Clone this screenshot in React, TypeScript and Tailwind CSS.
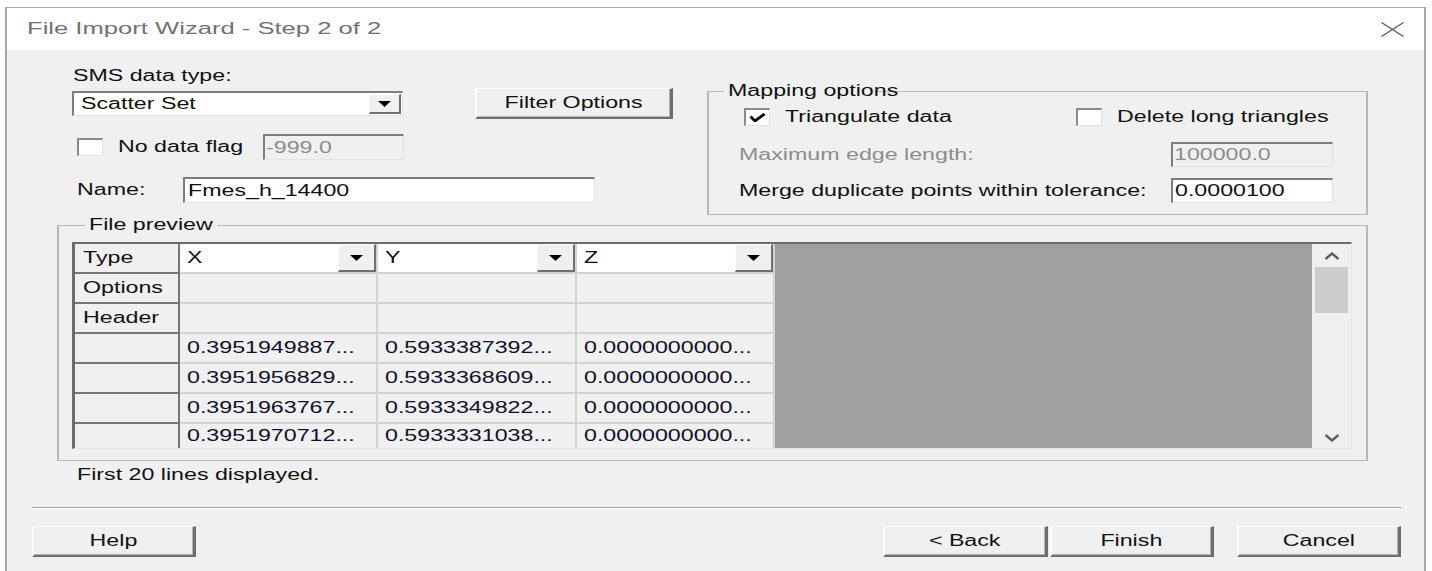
import React from "react";

type WideProps = { children?: React.ReactNode; center?: boolean; className?: string };

// Text drawn with the wide, stretched letterforms of the dialog
function Wide({ children, center = false, className = "" }: WideProps) {
  return (
    <span
      className={`inline-block whitespace-nowrap ${center ? "origin-center" : "origin-left"} ${className || "scale-x-[1.45]"}`}
    >
      {children}
    </span>
  );
}

function DropArrow() {
  return (
    <svg width="13" height="6" viewBox="0 0 13 6">
      <path d="M0 0h13L6.5 6z" fill="#000" />
    </svg>
  );
}

function Chevron({ up = false }: { up?: boolean }) {
  return (
    <svg width="16" height="8" viewBox="0 0 16 8">
      <path
        d={up ? "M1.5 7 L8 1.5 L14.5 7" : "M1.5 1 L8 6.5 L14.5 1"}
        fill="none"
        stroke="#5f5f5f"
        strokeWidth="2.4"
      />
    </svg>
  );
}

function CloseIcon() {
  return (
    <svg width="23" height="15" viewBox="0 0 23 15">
      <path d="M0.5 0.5 L22.5 14.5 M22.5 0.5 L0.5 14.5" stroke="#5c5c5c" strokeWidth="1.3" fill="none" />
    </svg>
  );
}

function Checkbox({ checked = false }: { checked?: boolean }) {
  return (
    <span className="flex h-[18px] w-[26px] shrink-0 items-center justify-center border-t-2 border-l-2 border-b border-r border-t-[#8a8a8a] border-l-[#8a8a8a] border-b-[#e2e2e2] border-r-[#e2e2e2] bg-white">
      {checked && (
        <svg width="17" height="9" viewBox="0 0 17 9">
          <path d="M1.5 3.5 L6 8 L15.5 1" fill="none" stroke="#000" strokeWidth="2.8" />
        </svg>
      )}
    </span>
  );
}

const sunken =
  "border-t-2 border-l-2 border-b border-r border-t-[#7d7d7d] border-l-[#7d7d7d] border-b-[#e3e3e3] border-r-[#e3e3e3]";

const dropButton =
  "flex items-center justify-center bg-[#f0f0f0] border-t border-l border-b-2 border-r-2 border-t-[#fdfdfd] border-l-[#fdfdfd] border-b-[#707070] border-r-[#707070]";

function Button({ children, className = "" }: { children: React.ReactNode; className?: string }) {
  return (
    <button
      className={`flex h-[31px] items-center justify-center bg-[#f0f0f0] border-t border-l-2 border-b-2 border-r-[3px] border-t-[#fdfdfd] border-l-[#fdfdfd] border-b-[#6e6e6e] border-r-[#6e6e6e] shadow-[inset_-1px_-1px_0_#b4b4b4] ${className}`}
    >
      <Wide center>{children}</Wide>
    </button>
  );
}

const dataRows = [
  ["0.3951949887...", "0.5933387392...", "0.0000000000..."],
  ["0.3951956829...", "0.5933368609...", "0.0000000000..."],
  ["0.3951963767...", "0.5933349822...", "0.0000000000..."],
  ["0.3951970712...", "0.5933331038...", "0.0000000000..."],
];

function PreviewGrid() {
  const rowHead = "flex items-center pl-[8px] bg-[#f0f0f0] border-r-2 border-[#767676]";
  const cell = "flex items-center pl-[7px] border-r-2 border-[#d3d3d3]";
  return (
    <div className="flex h-[207px] w-[1280px] border-t-2 border-l-[3px] border-r border-b border-t-[#6b6b6b] border-l-[#6b6b6b] border-r-[#e6e6e6] border-b-[#e6e6e6]">
      <div className="grid grid-cols-[105px_198px_199px_198px] grid-rows-[30px_30px_30px_30px_30px_30px_24px]">
        {/* Type row with a column type picker in each cell */}
        <div className={`${rowHead} border-b-2`}>
          <Wide>Type</Wide>
        </div>
        {["X", "Y", "Z"].map((c) => (
          <div key={c} className="flex border-r-2 border-b-2 border-[#d3d3d3] bg-white">
            <div className="flex flex-1 items-center pl-[7px]">
              <Wide>{c}</Wide>
            </div>
            <div className={`w-[38px] ${dropButton}`}>
              <DropArrow />
            </div>
          </div>
        ))}

        <div className={`${rowHead} border-b-2`}>
          <Wide>Options</Wide>
        </div>
        <div className={`${cell} border-b-2`} />
        <div className={`${cell} border-b-2`} />
        <div className={`${cell} border-b-2`} />

        <div className={`${rowHead} border-b-2`}>
          <Wide>Header</Wide>
        </div>
        <div className={`${cell} border-b-2`} />
        <div className={`${cell} border-b-2`} />
        <div className={`${cell} border-b-2`} />

        {dataRows.map((r, i) => {
          const last = i === dataRows.length - 1;
          return (
            <React.Fragment key={i}>
              <div className={`${rowHead} ${last ? "border-b-0" : "border-b-2"}`} />
              {r.map((v, j) => (
                <div key={j} className={`${cell} ${last ? "border-b-0" : "border-b-2"} text-[#10102a]`}>
                  <Wide>{v}</Wide>
                </div>
              ))}
            </React.Fragment>
          );
        })}
      </div>

      <div className="flex-1 bg-[#a0a0a0]" />

      <div className="flex w-[39px] flex-col bg-[#f0f0f0]">
        <div className="flex h-[23px] items-center justify-center">
          <Chevron up />
        </div>
        <div className="mx-[3px] h-[46px] bg-[#cdcdcd]" />
        <div className="flex-1" />
        <div className="flex h-[21px] items-center justify-center">
          <Chevron />
        </div>
      </div>
    </div>
  );
}

export default function App() {
  return (
    <div className="h-[571px] w-[1432px] overflow-hidden bg-white pl-[5px] pt-[7px] font-['Liberation_Sans',Arial,sans-serif] text-[16px] leading-[20px] text-[#111]">
      <div className="flex h-[600px] w-[1421px] flex-col border-t border-x-2 border-[#a8a8a8]">
        {/* Title bar */}
        <div className="flex h-[42px] shrink-0 items-center justify-between bg-white pl-[20px] pr-[20px]">
          <span className="text-[#727272]">
            <Wide className="scale-x-[1.6]">File Import Wizard - Step 2 of 2</Wide>
          </span>
          <CloseIcon />
        </div>

        {/* Dialog body */}
        <div className="flex flex-1 flex-col bg-[#f0f0f0] pl-[25px] pr-[23px]">
          <div className="flex items-start pt-[16px]">
            {/* Data type, no-data flag and name */}
            <div className="ml-[40px] flex w-[601px] flex-col">
              <div className="h-[20px] pl-[1px]">
                <Wide>SMS data type:</Wide>
              </div>
              <div className="mt-[2px] flex items-center">
                <div className={`flex h-[25px] w-[331px] bg-white ${sunken}`}>
                  <div className="flex flex-1 items-center pl-[7px]">
                    <Wide>Scatter Set</Wide>
                  </div>
                  <div className={`my-[1px] mr-[1px] w-[32px] ${dropButton}`}>
                    <DropArrow />
                  </div>
                </div>
                <Button className="ml-[72px] w-[198px]">Filter Options</Button>
              </div>
              <div className="mt-[15px] flex h-[26px] items-center pl-[5px]">
                <Checkbox />
                <div className="ml-[15px] w-[145px]">
                  <Wide>No data flag</Wide>
                </div>
                <div className={`flex h-[26px] w-[141px] items-center bg-[#f0f0f0] pl-[1px] text-[#8d8d8d] ${sunken}`}>
                  <Wide>-999.0</Wide>
                </div>
              </div>
              <div className="mt-[17px] flex h-[26px] items-center pl-[5px]">
                <div className="w-[106px]">
                  <Wide>Name:</Wide>
                </div>
                <div className={`flex h-[26px] w-[412px] items-center bg-white pl-[3px] ${sunken}`}>
                  <Wide>Fmes_h_14400</Wide>
                </div>
              </div>
            </div>

            {/* Mapping options */}
            <fieldset className="ml-[34px] mt-[15px] w-[661px] border-x-2 border-y border-[#b9b9b9] pb-[11px]">
              <legend className="ml-[15px] h-[20px] w-[150px] px-[4px]">
                <Wide>Mapping options</Wide>
              </legend>
              <div className="mt-[6px] flex h-[20px] items-center pl-[35px]">
                <div className="flex w-[332px] items-center">
                  <Checkbox checked />
                  <div className="ml-[15px]">
                    <Wide>Triangulate data</Wide>
                  </div>
                </div>
                <div className="flex items-center">
                  <Checkbox />
                  <div className="ml-[15px]">
                    <Wide>Delete long triangles</Wide>
                  </div>
                </div>
              </div>
              <div className="mt-[15px] flex h-[25px] items-center justify-between pl-[30px] pr-[33px] text-[#8d8d8d]">
                <Wide>Maximum edge length:</Wide>
                <div className={`flex h-[25px] w-[162px] items-center bg-[#f0f0f0] pl-[1px] ${sunken}`}>
                  <Wide>100000.0</Wide>
                </div>
              </div>
              <div className="mt-[11px] flex h-[25px] items-center justify-between pl-[30px] pr-[33px]">
                <Wide>Merge duplicate points within tolerance:</Wide>
                <div className={`flex h-[25px] w-[162px] items-center bg-white pl-[2px] ${sunken}`}>
                  <Wide>0.0000100</Wide>
                </div>
              </div>
            </fieldset>
          </div>

          {/* File preview */}
          <fieldset className="ml-[25px] w-[1311px] border-x-2 border-y border-[#b9b9b9] pb-[11px] pl-[13px]">
            <legend className="ml-[13px] h-[20px] w-[132px] px-[4px]">
              <Wide>File preview</Wide>
            </legend>
            <div className="mt-[7px]">
              <PreviewGrid />
            </div>
          </fieldset>

          <div className="ml-[45px] mt-[4px] h-[20px]">
            <Wide>First 20 lines displayed.</Wide>
          </div>

          <div className="mt-[22px] h-[2px] border-t border-b border-t-[#a0a0a0] border-b-white" />

          <div className="mt-[17px] flex items-center justify-between">
            <Button className="w-[164px]">Help</Button>
            <div className="flex items-center">
              <Button className="w-[165px]">&lt; Back</Button>
              <Button className="ml-[2px] w-[164px]">Finish</Button>
              <Button className="ml-[23px] w-[164px]">Cancel</Button>
            </div>
          </div>
        </div>
      </div>
    </div>
  );
}
